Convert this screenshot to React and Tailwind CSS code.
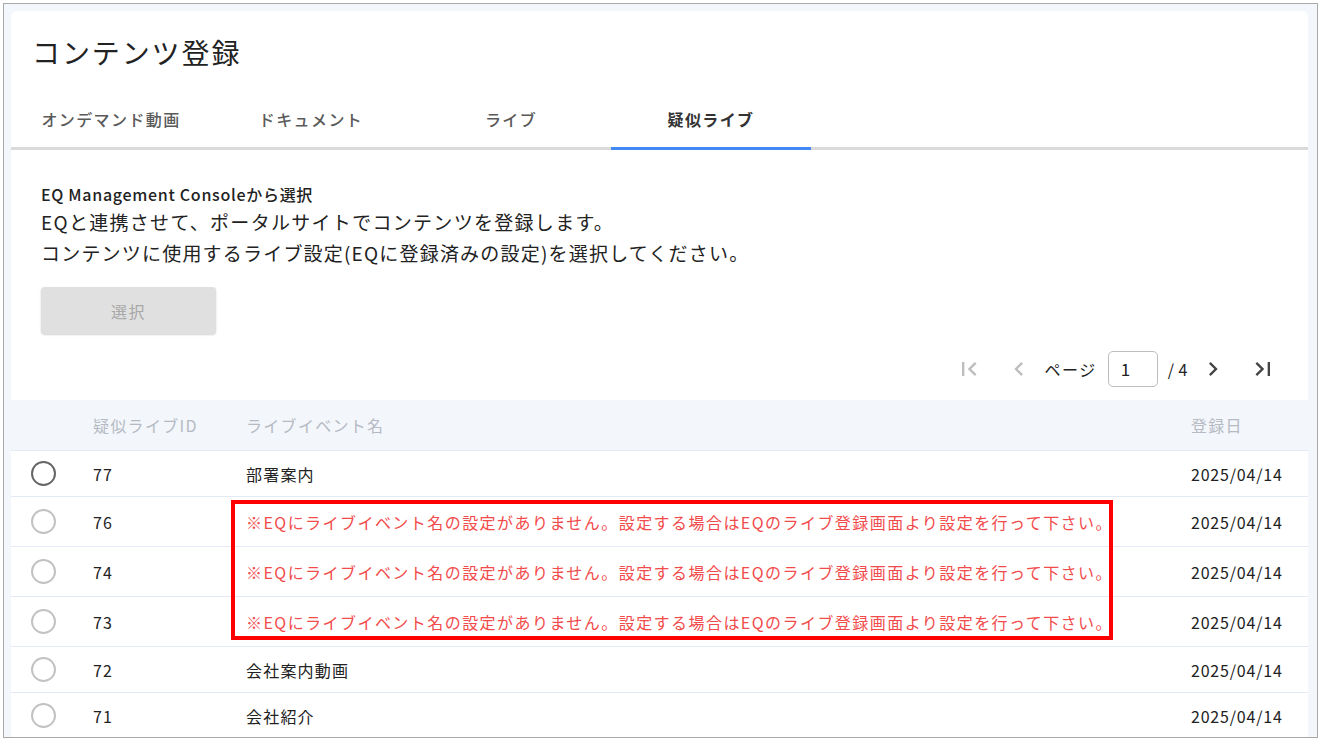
import { MdFirstPage, MdChevronLeft, MdChevronRight, MdLastPage } from "react-icons/md";

const tabs = ["オンデマンド動画", "ドキュメント", "ライブ", "疑似ライブ"];

const warning =
  "※EQにライブイベント名の設定がありません。設定する場合はEQのライブ登録画面より設定を行って下さい。";

const rows = [
  { id: 77, name: "部署案内", selected: true },
  { id: 76, name: null },
  { id: 74, name: null },
  { id: 73, name: null },
  { id: 72, name: "会社案内動画" },
  { id: 71, name: "会社紹介" },
];

function Radio({ dark }) {
  return (
    <span
      className={`block w-[25px] h-[25px] rounded-full border-2 ${
        dark ? "border-[#666]" : "border-[#c2c2c2]"
      }`}
    />
  );
}

export default function App() {
  return (
    <div className="bg-white pt-[3px] pl-[3px] pr-[5px] font-['Noto_Sans_CJK_JP',sans-serif] text-[#222]">
      <div className="h-[735px] overflow-hidden border border-[#a8a8a8] bg-[#f3f6fb] pt-[7px] pl-[7px] pr-[9px]">
        <div className="bg-white rounded-t-[6px]">
          {/* title */}
          <div className="pt-[21px] pl-[21px] text-[28px] leading-[40px] tracking-[1.9px]">コンテンツ登録</div>

          {/* tabs */}
          <div className="mt-[21px] flex border-b-[3px] border-[#dadada]">
            {tabs.map((t, i) => (
              <div
                key={t}
                className={`w-[200px] h-[57px] -mb-[3px] pb-[3px] flex items-center justify-center border-b-[3px] text-[16px] tracking-[1.4px] ${
                  i === 3 ? "border-[#4289f4] text-[#333] font-bold" : "border-transparent text-[#5a5a5a] font-medium"
                }`}
              >
                {t}
              </div>
            ))}
          </div>

          {/* description */}
          <div className="pl-[30px] pt-[32px]">
            <p className="text-[16px] leading-[24px] font-medium tracking-[0.7px]">EQ Management Consoleから選択</p>
            <p className="text-[19px] leading-[31px] tracking-[1.3px]">EQと連携させて、ポータルサイトでコンテンツを登録します。</p>
            <p className="text-[19px] leading-[31px] tracking-[1.2px]">
              コンテンツに使用するライブ設定(EQに登録済みの設定)を選択してください。
            </p>
            <button
              disabled
              className="mt-[19px] w-[175px] h-[47px] rounded-[4px] bg-[#e0e0e0] text-[#a8a8a8] text-[16px] tracking-[1.5px] shadow-[0_1px_2px_rgba(0,0,0,0.18)]"
            >
              選択
            </button>
          </div>

          {/* pagination */}
          <div className="mt-[17px] h-[36px] flex items-center justify-end pr-[20px] text-[16px] tracking-[1.5px]">
            <button className="w-[50px] flex justify-center text-[#bdbdbd]">
              <MdFirstPage size={28} />
            </button>
            <button className="w-[50px] flex justify-center text-[#bdbdbd]">
              <MdChevronLeft size={28} />
            </button>
            <span className="ml-[1px]">ページ</span>
            <div className="ml-[11px] w-[50px] h-[36px] rounded-[5px] border border-[#bdbdbd] flex items-center pl-[12px] text-[17px]">
              1
            </div>
            <span className="ml-[10px] whitespace-nowrap tracking-[0.5px]">/ 4</span>
            <button className="w-[50px] flex justify-center text-[#444]">
              <MdChevronRight size={28} />
            </button>
            <button className="w-[50px] flex justify-center text-[#444]">
              <MdLastPage size={28} />
            </button>
          </div>

          {/* table */}
          <div className="mt-[13px]">
            <div className="grid grid-cols-[82px_153px_1fr_117px] h-[51px] items-center bg-[#f3f6fb] border-b border-[#e3eaf5] text-[16px] text-[#b5bac3] tracking-[1.3px]">
              <div />
              <div>疑似ライブID</div>
              <div>ライブイベント名</div>
              <div>登録日</div>
            </div>
            <div className="relative">
              {rows.map((r) => (
                <div
                  key={r.id}
                  className={`grid grid-cols-[82px_153px_1fr_117px] items-center border-b border-[#e3eaf5] text-[16px] tracking-[1px] ${
                    r.name ? "h-[46px]" : "h-[50px]"
                  }`}
                >
                  <div className="pl-[20px]">
                    <Radio dark={r.selected} />
                  </div>
                  <div>{r.id}</div>
                  <div className={r.name ? "tracking-[1.2px]" : "text-[#f24b4b] tracking-[1.45px]"}>{r.name ?? warning}</div>
                  <div className="tracking-[0.8px]">2025/04/14</div>
                </div>
              ))}
              {/* annotation box */}
              <div className="absolute left-[220px] top-[49px] w-[882px] h-[140px] border-4 border-[#ff0000] pointer-events-none" />
            </div>
          </div>
        </div>
      </div>
    </div>
  );
}
